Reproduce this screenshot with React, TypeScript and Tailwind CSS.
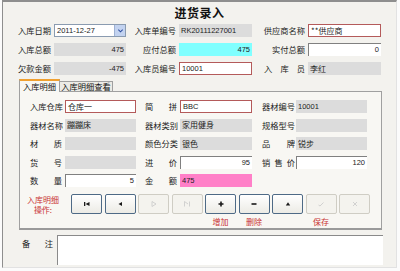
import React from "react";

const cjk = { fontFamily: '"Noto Sans CJK SC", "Noto Sans", sans-serif' };
const num = { fontFamily: '"Liberation Sans", Arial, sans-serif' };

function Lbl({ text, w, justify, className = "" }: { text: string; w: string; justify?: boolean; className?: string }) {
  if (justify) {
    const chars = text.split("");
    return (
      <div className={`${w} ${className} flex justify-between text-[8.25px] leading-none text-[#222]`} style={cjk}>
        {chars.map((c, i) => (
          <span key={i}>{c}</span>
        ))}
      </div>
    );
  }
  return (
    <div className={`${w} ${className} text-[8.25px] leading-none text-[#222] whitespace-nowrap`} style={cjk}>
      {text}
    </div>
  );
}

type BoxKind = "gray" | "red" | "sunken" | "cyan" | "pink";
function Box({ kind, w, value = "", right, n, className = "" }: { kind: BoxKind; w: string; value?: string; right?: boolean; n?: boolean; className?: string }) {
  const k =
    kind === "gray"
      ? "bg-[#dcdcdc]"
      : kind === "red"
      ? "bg-white border border-[#b45a5a]"
      : kind === "sunken"
      ? "bg-white border-t border-l border-[#808080]"
      : kind === "cyan"
      ? "bg-[#80ffff]"
      : "bg-[#ff80c8]";
  return (
    <div
      className={`${w} ${className} h-[13px] ${k} flex items-center ${right ? "justify-end pr-[2px]" : "pl-[2px]"} overflow-hidden whitespace-nowrap text-[#222] ${n ? "text-[7.5px]" : "text-[8px]"} leading-none`}
      style={n ? num : cjk}
    >
      {value}
    </div>
  );
}

function Ico({ k, dis }: { k: string; dis?: boolean }) {
  const c = dis ? "#c8c8c8" : "#1a1a1a";
  const s = { width: 10, height: 10 };
  switch (k) {
    case "first":
      return (
        <svg viewBox="0 0 10 10" style={s}>
          <rect x="2" y="3" width="1.3" height="4" fill={c} />
          <polygon points="7.5,3 3.5,5 7.5,7" fill={c} />
        </svg>
      );
    case "prev":
      return (
        <svg viewBox="0 0 10 10" style={s}>
          <polygon points="7,3 3.5,5 7,7" fill={c} />
        </svg>
      );
    case "next":
      return (
        <svg viewBox="0 0 10 10" style={s}>
          <path d="M3 2.5 V7.5 M3 2.5 L7 5 M3 7.5 L7 5" stroke={c} strokeWidth="0.8" fill="none" />
        </svg>
      );
    case "last":
      return (
        <svg viewBox="0 0 10 10" style={s}>
          <path d="M2.5 2.5 V7.5 M2.5 2.5 L6 5 M7.5 2.5 V7.5" stroke={c} strokeWidth="0.8" fill="none" />
        </svg>
      );
    case "plus":
      return (
        <svg viewBox="0 0 10 10" style={s}>
          <path d="M5 2.5 V7.5 M2.5 5 H7.5" stroke={c} strokeWidth="1.6" />
        </svg>
      );
    case "minus":
      return (
        <svg viewBox="0 0 10 10" style={s}>
          <path d="M2.5 5 H7.5" stroke={c} strokeWidth="1.6" />
        </svg>
      );
    case "up":
      return (
        <svg viewBox="0 0 10 10" style={s}>
          <polygon points="5,3.2 2.8,6.5 7.2,6.5" fill={c} />
        </svg>
      );
    case "check":
      return (
        <svg viewBox="0 0 10 10" style={s}>
          <path d="M2.5 6 L4 7 L7.5 3.5" stroke={c} strokeWidth="0.8" fill="none" />
        </svg>
      );
    default:
      return (
        <svg viewBox="0 0 10 10" style={s}>
          <path d="M3 3 L7 7 M7 3 L3 7" stroke={c} strokeWidth="0.8" fill="none" />
        </svg>
      );
  }
}

const buttons: { k: string; dis?: boolean; label?: string }[] = [
  { k: "first" },
  { k: "prev" },
  { k: "next", dis: true },
  { k: "last", dis: true },
  { k: "plus", label: "增加" },
  { k: "minus", label: "删除" },
  { k: "up" },
  { k: "check", dis: true, label: "保存" },
  { k: "cross", dis: true },
];

export default function App() {
  return (
    <div className="w-[400px] h-[271px] bg-[#fbfbfb] overflow-hidden">
      <div className="ml-[2px] w-[395px] h-[268px] border-l border-t-2 border-[#8e8e8e] border-r border-r-[#e2e2e2] border-b border-b-[#e2e2e2] bg-[#f3f2ee] flex flex-col">
        <div className="h-[22px] flex items-center justify-center pb-[1px]">
          <span className="text-[12px] font-bold leading-none text-[#111] tracking-[0.5px]" style={cjk}>
            进货录入
          </span>
        </div>

        <div className="flex flex-col gap-[6px]">
          <div className="flex items-center h-[13px]">
            <Lbl text="入库日期" w="w-[49px]" className="text-right pr-[1px]" />
            <div className="ml-[2px] w-[72px] h-[13px] bg-white border border-[#8a9bb0] flex items-center">
              <span className="flex-1 pl-[2px] text-[7.5px] leading-none text-[#222]" style={num}>
                2011-12-27
              </span>
              <div className="w-[11px] h-[11px] bg-[#c3d3f0] border-l border-[#9fb2d4] flex items-center justify-center">
                <svg viewBox="0 0 8 8" width="7" height="7">
                  <path d="M1.5 3 L4 5.5 L6.5 3" stroke="#3050a0" strokeWidth="1.2" fill="none" />
                </svg>
              </div>
            </div>
            <Lbl text="入库单编号" w="w-[52px]" className="text-right pr-[2px]" />
            <Box kind="gray" w="w-[73px] ml-[1px]" value="RK20111227001" n />
            <Lbl text="供应商名称" w="w-[54px]" className="text-right pr-[1px]" />
            <Box kind="red" w="w-[73px] ml-[2px]" value="**供应商" />
          </div>

          <div className="flex items-center h-[13px]">
            <Lbl text="入库总额" w="w-[49px]" className="text-right pr-[1px]" />
            <Box kind="gray" w="w-[72px] ml-[2px]" value="475" right n />
            <Lbl text="应付总额" w="w-[52px]" className="text-right pr-[2px]" />
            <Box kind="cyan" w="w-[73px] ml-[1px]" value="475" right n />
            <Lbl text="实付总额" w="w-[54px]" className="text-right pr-[1px]" />
            <Box kind="sunken" w="w-[73px] ml-[2px]" value="0" right n />
          </div>

          <div className="flex items-center h-[13px]">
            <Lbl text="欠款金额" w="w-[49px]" className="text-right pr-[1px]" />
            <Box kind="gray" w="w-[72px] ml-[2px]" value="-475" right n />
            <Lbl text="入库员编号" w="w-[52px]" className="text-right pr-[2px]" />
            <Box kind="red" w="w-[73px] ml-[1px]" value="10001" n />
            <div className="w-[54px] flex justify-end pr-[1px]">
              <Lbl text="入库员" w="w-[41px]" justify />
            </div>
            <Box kind="gray" w="w-[73px] ml-[2px]" value="李红" />
          </div>
        </div>

        <div className="ml-[16px] mt-[3px] flex items-end h-[13px] relative z-10">
          <div className="w-[41px] h-[13px] bg-[#f8f7f3] border-x border-t-2 border-x-[#a0a0a0] border-t-[#f0a030] flex items-center justify-center -mb-px">
            <span className="text-[8.25px] leading-none text-[#111]" style={cjk}>
              入库明细
            </span>
          </div>
          <div className="w-[53px] h-[10px] bg-[#ecebe6] border-r border-t border-[#a0a0a0] flex items-center justify-center">
            <span className="text-[8.25px] leading-none text-[#111]" style={cjk}>
              入库明细查看
            </span>
          </div>
        </div>

        <div className="ml-[16px] w-[363px] h-[139px] bg-[#f8f7f3] border border-[#a0a0a0] border-b-2 border-b-[#9a9a9a] flex flex-col pt-[8px]">
          <div className="flex flex-col gap-[5.5px]">
            <div className="flex items-center h-[13px]">
              <Lbl text="入库仓库" w="w-[32px] ml-[10px]" justify />
              <Box kind="red" w="w-[71px] ml-[3px]" value="仓库一" />
              <Lbl text="简拼" w="w-[32px] ml-[9px]" justify />
              <Box kind="red" w="w-[72px] ml-[3px]" value="BBC" n />
              <Lbl text="器材编号" w="w-[33px] ml-[10px]" justify />
              <Box kind="gray" w="w-[71px] ml-[1px]" value="10001" n />
            </div>
            <div className="flex items-center h-[13px]">
              <Lbl text="器材名称" w="w-[32px] ml-[10px]" justify />
              <Box kind="gray" w="w-[71px] ml-[3px]" value="蹦蹦床" />
              <Lbl text="器材类别" w="w-[32px] ml-[9px]" justify />
              <Box kind="gray" w="w-[72px] ml-[3px]" value="家用健身" />
              <Lbl text="规格型号" w="w-[33px] ml-[10px]" justify />
              <Box kind="gray" w="w-[71px] ml-[1px]" />
            </div>
            <div className="flex items-center h-[13px]">
              <Lbl text="材质" w="w-[32px] ml-[10px]" justify />
              <Box kind="gray" w="w-[71px] ml-[3px]" />
              <Lbl text="颜色分类" w="w-[32px] ml-[9px]" justify />
              <Box kind="gray" w="w-[72px] ml-[3px]" value="银色" />
              <Lbl text="品牌" w="w-[33px] ml-[10px]" justify />
              <Box kind="gray" w="w-[71px] ml-[1px]" value="锐步" />
            </div>
            <div className="flex items-center h-[13px]">
              <Lbl text="货号" w="w-[32px] ml-[10px]" justify />
              <Box kind="gray" w="w-[71px] ml-[3px]" />
              <Lbl text="进价" w="w-[32px] ml-[9px]" justify />
              <Box kind="sunken" w="w-[72px] ml-[3px]" value="95" right n />
              <Lbl text="销售价" w="w-[33px] ml-[10px]" justify />
              <Box kind="sunken" w="w-[71px] ml-[1px]" value="120" right n />
            </div>
            <div className="flex items-center h-[13px]">
              <Lbl text="数量" w="w-[32px] ml-[10px]" justify />
              <Box kind="sunken" w="w-[71px] ml-[3px]" value="5" right n />
              <Lbl text="金额" w="w-[32px] ml-[9px]" justify />
              <Box kind="pink" w="w-[72px] ml-[3px]" value="475" n />
            </div>
          </div>

          <div className="flex mt-[7px]">
            <div className="ml-[2px] w-[42px] h-[21px] flex flex-col items-center justify-center text-[8px] leading-[10px] text-[#c83232]" style={cjk}>
              <span className="block h-[10px] leading-[10px]">入库明细</span>
              <span className="block h-[10px] leading-[10px]">操作:</span>
            </div>
            <div className="ml-[7px] flex gap-[2.5px]">
              {buttons.map((b, i) => (
                <div key={i} className="flex flex-col items-center">
                  <div
                    className={`w-[31px] h-[20px] rounded-[2px] flex items-center justify-center ${
                      b.dis
                        ? "border border-[#cfcdc4] bg-[#f4f3ee]"
                        : "border border-[#4e6a86] bg-gradient-to-b from-[#ffffff] to-[#ecebe5]"
                    }`}
                  >
                    <Ico k={b.k} dis={b.dis} />
                  </div>
                  <div className="h-[12px] mt-[2px] flex items-center text-[8px] leading-none text-[#c83232]" style={cjk}>
                    {b.label ?? ""}
                  </div>
                </div>
              ))}
            </div>
          </div>
        </div>

        <div className="flex mt-[5px]">
          <Lbl text="备注" w="w-[33px] ml-[18px]" justify className="mt-[4px] px-[1px]" />
          <div className="ml-[3px] w-[326px] h-[30px] bg-white border-t border-l border-[#8a8a8a]" />
        </div>
      </div>
    </div>
  );
}
